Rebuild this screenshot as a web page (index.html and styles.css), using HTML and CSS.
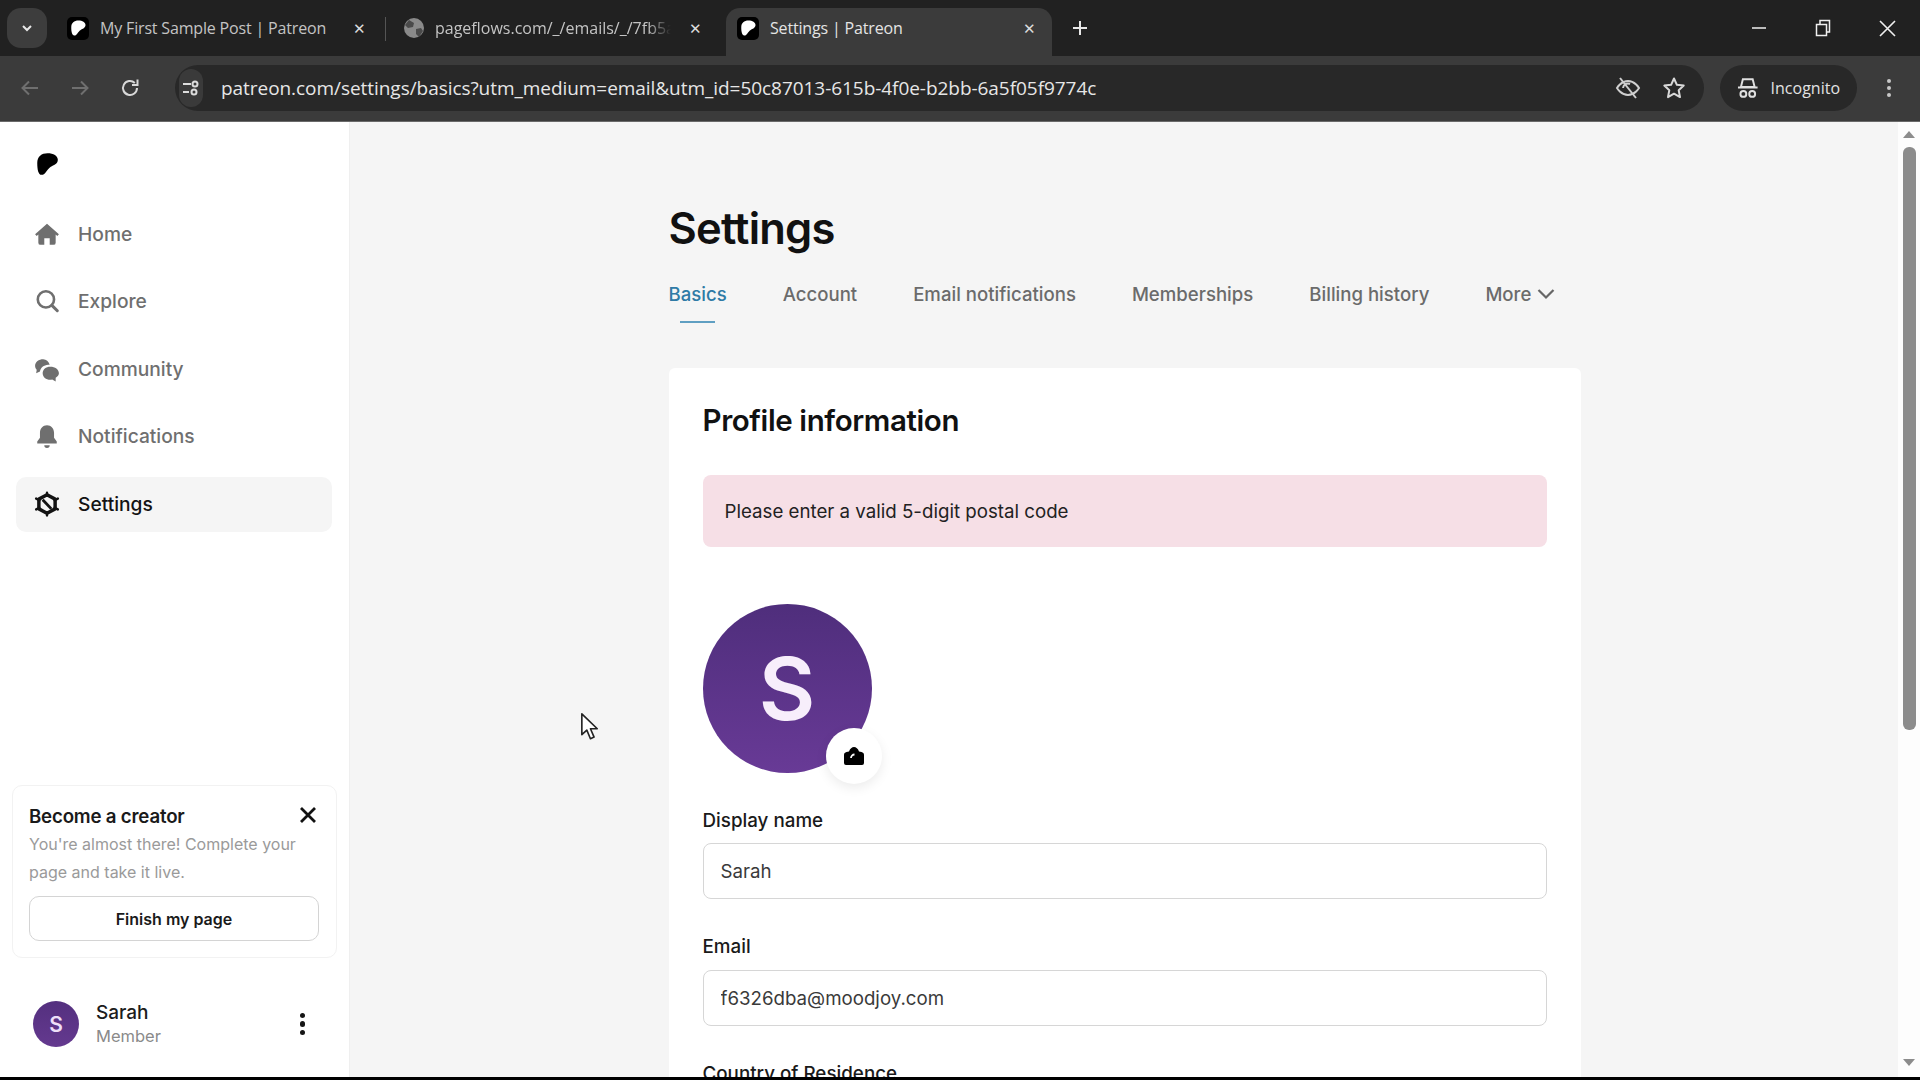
FILE: index.html
```html
<!DOCTYPE html>
<html lang="en">
    <head>
        <meta charset="utf-8"/>
        <title>Settings | Patreon</title>
        <link rel="stylesheet" href="styles.css">
    </head>

    <body>
        <svg class="defs" width="0" height="0">
            <symbol id="logo" viewBox="0 0 24 24">
                <path d="M3 11C3 5 7 2 12.500 2 18 2 22 4.500 22 8c0 4-4 5-6.500 6.500C11.500 17 11 22 7 22c-3 0-4-5-4-11z"/>
            </symbol>
        </svg>

        <div class="window">
            <!-- browser tabs -->
            <div class="tabstrip">
                <div class="tab-search">
                    <svg width="14" height="14" viewBox="0 0 14 14"><path d="M3 5l4 4 4-4" fill="none" stroke="#e8e8e8" stroke-width="2"/></svg>
                </div>
                <div class="tab tab-one">
                    <span class="tab-favicon"><svg width="18" height="18"><use href="#logo"/></svg></span>
                    <span class="tab-title">My First Sample Post | Patreon</span>
                    <span class="tab-close">✕</span>
                </div>
                <div class="tab tab-two">
                    <svg class="tab-globe" width="22" height="22" viewBox="0 0 22 22">
                        <circle cx="11" cy="11" r="10" fill="#8a8a8a"/>
                        <path d="M6 3l5 3-1 4-5 1-3-3zM13 12l5-1 2 3-4 6-3-3z" fill="#4a4a4a"/>
                    </svg>
                    <span class="tab-title tab-title-cut">pageflows.com/_/emails/_/7fb5ab</span>
                    <span class="tab-close">✕</span>
                </div>
                <div class="tab tab-active">
                    <span class="tab-favicon"><svg width="18" height="18"><use href="#logo"/></svg></span>
                    <span class="tab-title">Settings | Patreon</span>
                    <span class="tab-close">✕</span>
                </div>
                <div class="tab-new">
                    <svg width="16" height="16" viewBox="0 0 16 16"><path d="M8 1v14M1 8h14" stroke="#e8e8e8" stroke-width="2"/></svg>
                </div>
                <div class="win-controls">
                    <svg width="16" height="16" viewBox="0 0 16 16"><path d="M1 8h14" stroke="#f0f0f0" stroke-width="1.500"/></svg>
                    <svg width="16" height="18" viewBox="0 0 16 18"><path d="M1.500 5.500h10v11h-10zM5 5V1.500h9.500V13H12" fill="none" stroke="#f0f0f0" stroke-width="1.500"/></svg>
                    <svg width="17" height="17" viewBox="0 0 17 17"><path d="M1 1l15 15M16 1L1 16" stroke="#f0f0f0" stroke-width="1.600"/></svg>
                </div>
            </div>

            <!-- address bar -->
            <div class="toolbar">
                <div class="tool-btn">
                    <svg width="20" height="20" viewBox="0 0 20 20"><path d="M18 10H3M9 3.500L2.500 10 9 16.500" fill="none" stroke="#6f6f6f" stroke-width="2"/></svg>
                </div>
                <div class="tool-btn">
                    <svg width="20" height="20" viewBox="0 0 20 20"><path d="M2 10h15M11 3.500l6.500 6.500-6.500 6.500" fill="none" stroke="#6f6f6f" stroke-width="2"/></svg>
                </div>
                <div class="tool-btn">
                    <svg width="22" height="22" viewBox="0 0 22 22"><path d="M18 11a7 7 0 1 1-2.200-5.100M18.500 2.500v5.500H13" fill="none" stroke="#d8d8d8" stroke-width="2"/></svg>
                </div>
                <div class="omnibox">
                    <span class="site-chip">
                        <svg width="20" height="20" viewBox="0 0 20 20">
                            <path d="M2 6h8M2 14h6" stroke="#dcdcdc" stroke-width="2"/>
                            <circle cx="14" cy="6" r="2.500" fill="none" stroke="#dcdcdc" stroke-width="2"/>
                            <circle cx="13" cy="14" r="2.500" fill="none" stroke="#dcdcdc" stroke-width="2"/>
                        </svg>
                    </span>
                    <span class="url">patreon.com/settings/basics?utm_medium=email&amp;utm_id=50c87013-615b-4f0e-b2bb-6a5f05f9774c</span>
                    <svg class="omni-icon" width="26" height="26" viewBox="0 0 26 26">
                        <path d="M2 13s4-7 11-7 11 7 11 7-4 7-11 7S2 13 2 13z" fill="none" stroke="#cfcfcf" stroke-width="2"/>
                        <path d="M8 13a5 5 0 0 1 7-4" fill="none" stroke="#cfcfcf" stroke-width="2"/>
                        <path d="M5 3l16 20" stroke="#cfcfcf" stroke-width="2"/>
                    </svg>
                    <svg class="omni-icon" width="24" height="24" viewBox="0 0 24 24"><path d="M12 2.500l2.900 6.300 6.800.8-5 4.700 1.300 6.800-6-3.400-6 3.400 1.300-6.800-5-4.700 6.800-.8z" fill="none" stroke="#d8d8d8" stroke-width="2" stroke-linejoin="round"/></svg>
                </div>
                <div class="incognito">
                    <svg width="22" height="22" viewBox="0 0 22 22">
                        <path d="M6 2h10l2 8H4zM1 10.500h20" fill="none" stroke="#e0e0e0" stroke-width="2"/>
                        <circle cx="6.500" cy="17" r="3" fill="none" stroke="#e0e0e0" stroke-width="2"/>
                        <circle cx="15.500" cy="17" r="3" fill="none" stroke="#e0e0e0" stroke-width="2"/>
                    </svg>
                    <span>Incognito</span>
                </div>
                <div class="tool-dots"><i></i><i></i><i></i></div>
            </div>

            <div class="viewport">
                <!-- patreon side menu -->
                <aside class="sidebar">
                    <svg class="brand" width="26" height="26"><use href="#logo"/></svg>
                    <nav class="nav">
                        <a class="nav-item">
                            <svg width="26" height="26" viewBox="0 0 24 24"><path d="M12 2.500L1 12.200l1.500 1.600L4 12.500V20a2 2 0 0 0 2 2h3.500v-6h5v6H18a2 2 0 0 0 2-2v-7.500l1.500 1.300 1.500-1.600z"/></svg>
                            Home
                        </a>
                        <a class="nav-item">
                            <svg width="26" height="26" viewBox="0 0 24 24"><circle cx="11" cy="10.500" r="7.500" fill="none" stroke="currentColor" stroke-width="2.400"/><path d="M16.500 16l5 5" stroke="currentColor" stroke-width="2.800" stroke-linecap="round"/></svg>
                            Explore
                        </a>
                        <a class="nav-item">
                            <svg width="26" height="26" viewBox="0 0 24 24"><path d="M8.500 3C4.500 3 1 5.500 1 9c0 1.500.6 2.800 1.500 3.800L2 16l3.500-1.600c.4-3.600 3.500-6.200 7.500-6.400.8 0 1.200 0 1.500.1C13.500 5 11.300 3 8.500 3z"/><path d="M15 10c-4 0-7 2.500-7 6s3 6 7 6c.6 0 1.200 0 1.800-.2l3.200 1.700V20c1.800-1 3-2.400 3-4 0-3.500-3.500-6-8-6z"/></svg>
                            Community
                        </a>
                        <a class="nav-item">
                            <svg width="26" height="26" viewBox="0 0 24 24"><path d="M12 2c-3.800 0-6.500 3-6.500 7v4.500L3 17v2h18v-2l-2.500-3.500V9c0-4-2.700-7-6.500-7zM9.500 20.500a2.500 2.500 0 0 0 5 0z"/></svg>
                            Notifications
                        </a>
                        <a class="nav-item nav-active">
                            <svg width="26" height="26" viewBox="0 0 24 24">
                                <path d="M12 3.500l7.500 4v9l-7.500 4-7.500-4v-9z" fill="none" stroke="currentColor" stroke-width="3.200" stroke-linejoin="round"/>
                                <path d="M8 8l8 8.500" stroke="currentColor" stroke-width="2.600"/>
                                <path d="M12 1.500v3M22 7l-3 1.500M22 17l-3-1.500M12 22.500v-3M2 17l3-1.500M2 7l3 1.500" stroke="currentColor" stroke-width="2.200" stroke-linecap="round"/>
                            </svg>
                            Settings
                        </a>
                    </nav>

                    <div class="promo">
                        <div class="promo-head">
                            <h4>Become a creator</h4>
                            <svg width="18" height="18" viewBox="0 0 18 18"><path d="M2 2l14 14M16 2L2 16" stroke="#111" stroke-width="2.800"/></svg>
                        </div>
                        <p>You're almost there! Complete your page and take it live.</p>
                        <button class="promo-btn">Finish my page</button>
                    </div>

                    <div class="user">
                        <div class="user-avatar">S</div>
                        <div class="user-info">
                            <div class="user-name">Sarah</div>
                            <div class="user-role">Member</div>
                        </div>
                        <div class="user-dots"><i></i><i></i><i></i></div>
                    </div>
                </aside>

                <!-- settings page -->
                <main class="main">
                    <div class="content">
                        <h1>Settings</h1>
                        <div class="tabs">
                            <a class="page-tab page-tab-active">Basics</a>
                            <a class="page-tab">Account</a>
                            <a class="page-tab">Email notifications</a>
                            <a class="page-tab">Memberships</a>
                            <a class="page-tab">Billing history</a>
                            <a class="page-tab page-tab-more">More
                                <svg width="18" height="12" viewBox="0 0 18 12"><path d="M1.500 2L9 9.500 16.500 2" fill="none" stroke="#666" stroke-width="2.200"/></svg>
                            </a>
                        </div>

                        <section class="card">
                            <h2>Profile information</h2>
                            <div class="alert">Please enter a valid 5-digit postal code</div>

                            <div class="avatar">
                                S
                                <div class="avatar-edit">
                                    <svg width="22" height="20" viewBox="0 0 22 20">
                                        <path d="M1 9c0-1.500 1-2.500 2.500-2.900L6 5.500C7 2.500 9 1 11 1s4 1.500 5 4.500l2.500.6C20 6.500 21 7.500 21 9v8a2 2 0 0 1-2 2H3a2 2 0 0 1-2-2z"/>
                                        <path d="M8 12a3.500 3.500 0 0 1 3.500-3.500" fill="none" stroke="#fff" stroke-width="1.800"/>
                                    </svg>
                                </div>
                            </div>

                            <label class="field-label field-first">Display name</label>
                            <input class="field-input" type="text" value="Sarah">

                            <label class="field-label">Email</label>
                            <input class="field-input" type="text" value="f6326dba@moodjoy.com">

                            <label class="field-label">Country of Residence</label>
                        </section>
                    </div>
                </main>

                <div class="scrollbar">
                    <span class="arrow-up"></span>
                    <div class="scroll-thumb"></div>
                    <span class="arrow-down"></span>
                </div>

                <svg class="cursor" width="20" height="29" viewBox="0 0 22 32"><path d="M2 2v23l5.500-5 4 9.500 4-1.800-4-9.200H19z" fill="#fff" stroke="#222" stroke-width="1.800" stroke-linejoin="round"/></svg>
            </div>
            <div class="bottom-edge"></div>
        </div>
    </body>
</html>
```

FILE: styles.css
```css
* { box-sizing: border-box; }
html, body { margin: 0; padding: 0; }
body { width: 1920px; height: 1080px; overflow: hidden; background: #000; font-family: Inter, "Liberation Sans", sans-serif; }
.defs { position: absolute; }
.window { display: flex; flex-direction: column; height: 1080px; }

/* browser tabs */
.tabstrip {
    display: flex; align-items: flex-end;
    height: 56px; padding-left: 7px; background: #212121;
    font-family: "Open Sans", "Liberation Sans", sans-serif; color: #c4c4c4;
}
.tab-search {
    display: flex; align-items: center; justify-content: center;
    width: 40px; height: 40px; margin-bottom: 8px; margin-right: 9px;
    background: #3d3d3d; border-radius: 14px;
}
.tab { display: flex; align-items: center; height: 48px; padding-bottom: 8px; position: relative; font-size: 16px; }
.tab-one { width: 330px; padding-left: 11px; }
.tab-one::after {
    content: ""; position: absolute; right: 0; top: 9px;
    width: 1px; height: 24px; background: #555;
}
.tab-two { width: 340px; padding-left: 17px; }
.tab-active {
    width: 326px; padding-left: 11px; color: #e4e4e4;
    background: #3b3b3b; border-radius: 14px 14px 0 0;
}
.tab-favicon {
    display: flex; align-items: center; justify-content: center;
    width: 22px; height: 23px; margin-right: 11px;
    background: #000; border-radius: 5px; fill: #fff;
}
.tab-globe { margin-right: 10px; flex: none; }
.tab-title { white-space: nowrap; letter-spacing: -0.17px; }
.tab-title-cut {
    width: 236px; overflow: hidden; letter-spacing: 0;
    -webkit-mask-image: linear-gradient(to right, #000 90%, transparent);
    mask-image: linear-gradient(to right, #000 90%, transparent);
}
.tab-close { margin-left: auto; margin-right: 20px; font-size: 15px; color: #dcdcdc; }
.tab-two .tab-close { margin-right: 24px; }
.tab-active .tab-close { margin-right: 16px; }
.tab-new { display: flex; align-items: center; height: 48px; padding-bottom: 8px; margin-left: 20px; }
.win-controls {
    display: flex; align-items: center; gap: 48px;
    height: 56px; margin-left: auto; margin-right: 24px;
}

/* address bar */
.toolbar {
    display: flex; align-items: center;
    height: 66px; padding: 0 0 1px 5px; background: #3b3b3b;
    border-bottom: 1px solid #6a6a6a;
    font-family: "Open Sans", "Liberation Sans", sans-serif;
}
.tool-btn { display: flex; align-items: center; justify-content: center; width: 50px; }
.omnibox {
    display: flex; align-items: center; flex: 1;
    height: 46px; margin-left: 20px; padding-left: 4px; padding-right: 18px;
    background: #282828; border-radius: 23px;
}
.site-chip {
    display: flex; align-items: center; justify-content: center;
    width: 24px; height: 38px; margin: 0 18px 0 0; background: #3a3a3a; border-radius: 12px;
}
.url { flex: 1; color: #e6e6e6; font-size: 19px; white-space: nowrap; letter-spacing: -0.05px; }
.omni-icon { margin-left: 21px; }
.incognito {
    display: flex; align-items: center; gap: 12px;
    height: 46px; margin-left: 16px; padding: 0 17px;
    width: 137px; background: #282828; border-radius: 23px;
    color: #e2e2e2; font-size: 16px;
}
.tool-dots { display: flex; flex-direction: column; align-items: center; gap: 3px; width: 63px; }
.tool-dots i { width: 4px; height: 4px; background: #c8c8c8; border-radius: 50%; }

.viewport { display: flex; flex: 1; position: relative; min-height: 0; background: #f5f5f5; overflow: hidden; }
.bottom-edge { height: 3px; background: #000; }

/* side menu */
.sidebar {
    display: flex; flex-direction: column; flex: none;
    width: 350px; padding: 0 17px 0 12px;
    background: #fff; border-right: 1px solid #efefef;
}
.brand { display: block; margin: 29px 0 30px 22px; fill: #000; flex: none; }
.nav { display: flex; flex-direction: column; gap: 12.500px; }
.nav-item {
    display: flex; align-items: center; gap: 18px;
    height: 55px; margin-left: 4px; padding-left: 18px; padding-bottom: 2px; border-radius: 10px;
    color: #6f6f6f; fill: #6f6f6f; font-size: 19.200px; font-weight: 500;
}
.nav-active { background: #f5f5f5; color: #131313; fill: #131313; }
.promo {
    margin-top: auto; width: 325px; height: 173px; padding: 18px 16px;
    background: #fff; border: 1px solid #f2f2f2; border-radius: 10px;
}
.promo-head { display: flex; justify-content: space-between; align-items: center; height: 24px; padding-right: 3px; }
.promo-head svg { margin-top: -2px; }
.promo-head h4 { margin: 0; font-size: 18.700px; font-weight: 600; color: #1a1a1a; letter-spacing: -0.2px; }
.promo p { margin: 2px 0 10px; color: #9a9a9a; font-size: 16px; line-height: 28px; }
.promo-btn {
    display: block; width: 290px; height: 45px; background: #fff;
    border: 1.500px solid #d4d4d4; border-radius: 10px;
    font-family: inherit; font-size: 16px; font-weight: 600; color: #1a1a1a;
}
.user { display: flex; align-items: center; height: 46px; margin: 43px 0 30px 21px; }
.user-avatar {
    display: flex; align-items: center; justify-content: center; flex: none;
    width: 46px; height: 46px; border-radius: 50%;
    background: linear-gradient(#54307f, #64398f); color: #eedff8; font-size: 21px; font-weight: 600;
}
.user-info { margin-left: 17px; }
.user-name { font-size: 19px; line-height: 24px; font-weight: 500; color: #1c1c1c; }
.user-role { font-size: 16.500px; line-height: 22px; color: #8a8a8a; }
.user-dots { display: flex; flex-direction: column; gap: 3px; margin-left: auto; margin-right: 27px; }
.user-dots i { width: 5.500px; height: 5.500px; background: #151515; border-radius: 50%; }

/* settings page */
.main { flex: 1; min-width: 0; padding-left: 1px; }
.content { width: 912px; margin: 0 auto; padding-top: 81px; }
h1 { margin: 0; font-size: 43.500px; line-height: 50px; font-weight: 600; color: #111; letter-spacing: -0.8px; }
.tabs { display: flex; gap: 56px; margin-top: 29px; height: 86px; align-items: flex-start; }
.page-tab { font-size: 18.600px; line-height: 24px; font-weight: 500; color: #6b6b6b; white-space: nowrap; }
.page-tab-active { color: #2f7ba6; }
.page-tab-active::after {
    content: ""; display: block;
    width: 35px; height: 2px; margin: 15px auto 0; background: #5f9fc2;
}
.page-tab-more { display: flex; align-items: center; gap: 6px; }
.card { padding: 34px 34px 0; background: #fff; border-radius: 6px; }
h2 { margin: 0; font-size: 29.500px; line-height: 36px; font-weight: 600; color: #111; letter-spacing: -0.4px; }
.alert {
    display: flex; align-items: center;
    height: 72px; margin-top: 37px; padding-left: 22px;
    background: #f6dfe6; border-radius: 8px;
    font-size: 18.700px; color: #222;
}
.avatar {
    display: flex; align-items: center; justify-content: center;
    position: relative; width: 169px; height: 169px; margin-top: 57px;
    background: linear-gradient(#4f2e7c, #683a96); border-radius: 50%;
    color: #f7eefb; font-size: 87px; font-weight: 600;
}
.avatar-edit {
    display: flex; align-items: center; justify-content: center;
    position: absolute; left: 123px; top: 124px;
    width: 56px; height: 56px; background: #fff; border-radius: 50%;
    box-shadow: 0 4px 12px rgba(0, 0, 0, 0.08);
}
.field-label { display: block; margin-top: 36px; margin-bottom: 11px; font-size: 18.800px; line-height: 24px; font-weight: 500; color: #1a1a1a; }
.field-first { margin-bottom: 10px; }
.field-input {
    display: block; width: 100%; height: 56px; padding: 0 17px;
    background: #fff; border: 1.500px solid #d6d6d6; border-radius: 8px;
    font-family: inherit; font-size: 18.700px; color: #3a3a3a; outline: none;
}

/* page scrollbar */
.scrollbar { position: relative; flex: none; width: 22px; background: #fdfdfd; }
.scroll-thumb {
    position: absolute; left: 5px; top: 25px;
    width: 13px; height: 583px; background: #8c8c8c; border-radius: 6px;
}
.arrow-up, .arrow-down {
    position: absolute; left: 5px;
    border-left: 6px solid transparent; border-right: 6px solid transparent;
}
.arrow-up { top: 9px; border-bottom: 7px solid #8c8c8c; }
.arrow-down { bottom: 11px; border-top: 7px solid #8c8c8c; }
.cursor { position: absolute; left: 580px; top: 590px; }
```
